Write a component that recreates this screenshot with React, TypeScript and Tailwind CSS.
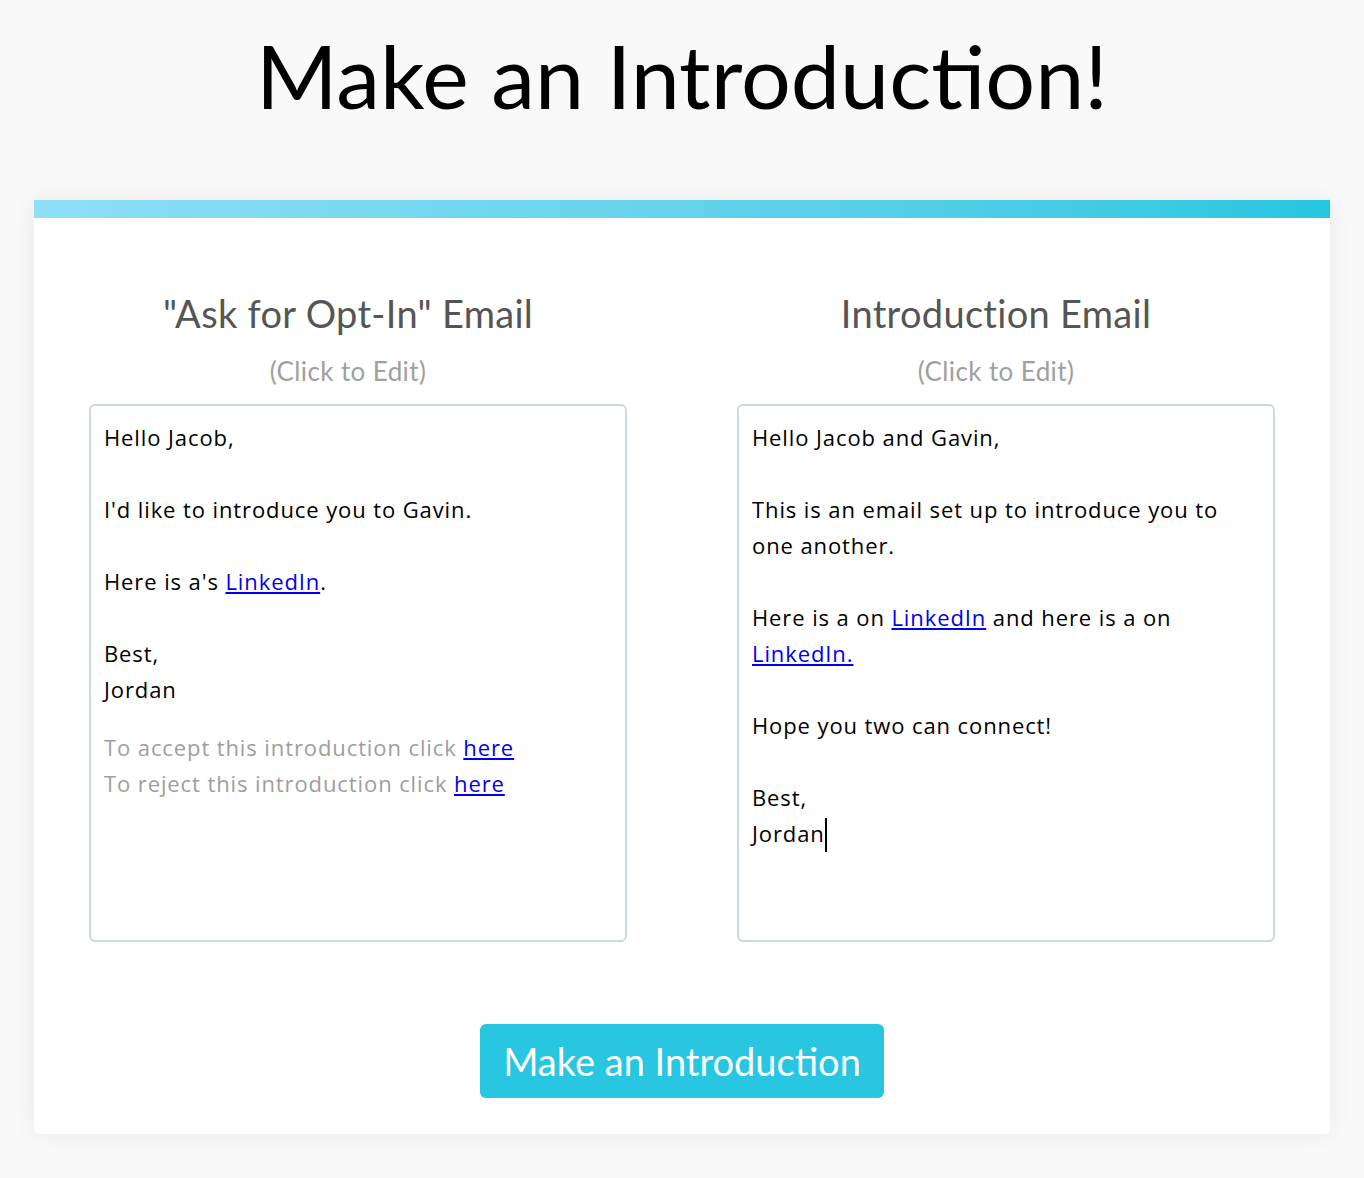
const font = { fontFamily: '"Lato", "Noto Sans", sans-serif' };
const bodyFont = { fontFamily: '"Open Sans", "Noto Sans", sans-serif' };

const EmailBox = ({ children }: { children: React.ReactNode }) => (
  <div
    className="h-[538px] w-[538px] rounded-md border-2 border-[#cdd8e4] bg-white px-[13px] py-[13px] text-[22px] leading-[36px] tracking-[0.9px] text-black"
    style={bodyFont}
  >
    {children}
  </div>
);

const Link = ({ children }: { children: React.ReactNode }) => (
  <a href="#" className="text-[#0000ee] underline">
    {children}
  </a>
);

const Column = ({ title, children }: { title: string; children: React.ReactNode }) => (
  <div className="flex flex-col items-center">
    <div className="flex w-full flex-col items-center pr-5">
      <h2 className="text-[38px] leading-[46px] tracking-[0.3px] text-[#555]">{title}</h2>
      <p className="mt-[18px] text-[26px] leading-[34px] tracking-[0.4px] text-[#a0a0a0]">(Click to Edit)</p>
    </div>
    <div className="mt-[16px]">{children}</div>
  </div>
);

export default function App() {
  return (
    <div className="min-h-[1178px] bg-[#f9f9f9] pt-[20px]" style={font}>
      <h1 className="text-center text-[88px] font-normal leading-[110px] text-black">
        Make an Introduction!
      </h1>
      <div className="mx-[34px] mt-[70px] overflow-hidden rounded-b-md bg-white shadow-[0_0_24px_rgba(0,0,0,0.07)]">
        <div className="h-[18px] bg-gradient-to-r from-[#8ddff6] to-[#26c6e1]" />
        <div className="flex justify-between px-[55px] pt-[72px]">
          <Column title={'"Ask for Opt-In" Email'}>
            <EmailBox>
              <p>Hello Jacob,</p>
              <p className="mt-[36px]">I'd like to introduce you to Gavin.</p>
              <p className="mt-[36px]">
                Here is a's <Link>LinkedIn</Link>.
              </p>
              <p className="mt-[36px]">Best,</p>
              <p>Jordan</p>
              <div className="mt-[22px] text-[#9e9e9e]">
                <p>
                  To accept this introduction click <Link>here</Link>
                </p>
                <p>
                  To reject this introduction click <Link>here</Link>
                </p>
              </div>
            </EmailBox>
          </Column>
          <Column title="Introduction Email">
            <EmailBox>
              <p>Hello Jacob and Gavin,</p>
              <p className="mt-[36px]">This is an email set up to introduce you to one another.</p>
              <p className="mt-[36px]">
                Here is a on <Link>LinkedIn</Link> and here is a on <Link>LinkedIn.</Link>
              </p>
              <p className="mt-[36px]">Hope you two can connect!</p>
              <p className="mt-[36px]">Best,</p>
              <p>
                Jordan<span className="inline-block h-[34px] w-[2px] bg-black align-[-10px]" />
              </p>
            </EmailBox>
          </Column>
        </div>
        <div className="flex justify-center pb-[36px] pt-[82px]">
          <button className="h-[74px] w-[404px] rounded-md bg-[#29c6e2] text-[38px] text-white">
            Make an Introduction
          </button>
        </div>
      </div>
    </div>
  );
}
